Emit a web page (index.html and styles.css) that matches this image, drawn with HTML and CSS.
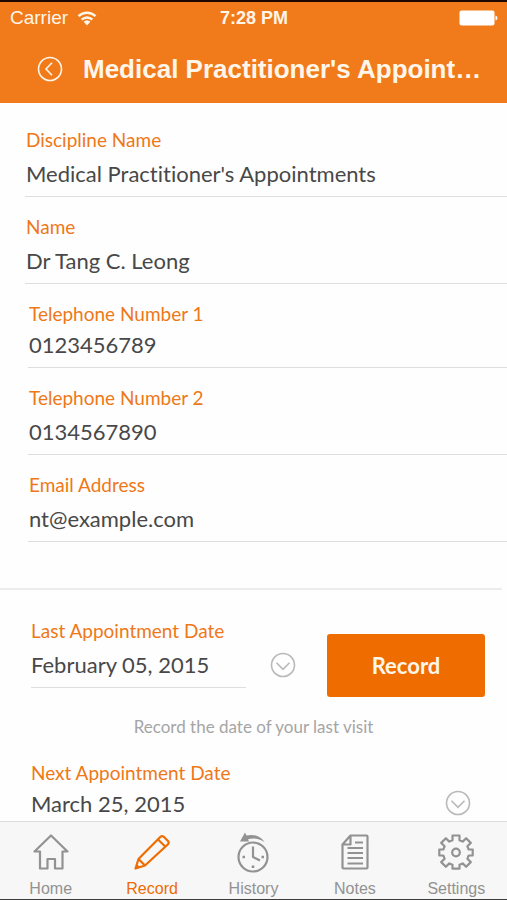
FILE: index.html
```html
<!DOCTYPE html>
<html lang="en">
<head>
<meta charset="utf-8">
<meta name="viewport" content="width=device-width, initial-scale=1">
<title>Medical Practitioner's Appointments</title>
<link rel="stylesheet" href="styles.css">
</head>
<body>
<header class="header">
  <div class="status">
    <span class="carrier">Carrier
      <svg class="wifi" viewBox="0 0 20 15" aria-hidden="true"><path d="M1.500 5.200a12.200 12.200 0 0 1 17 0M4.700 8.600a7.600 7.600 0 0 1 10.600 0" fill="none" stroke="currentColor" stroke-width="2.5"/><path d="M6.600 10.800a5 5 0 0 1 6.800 0L10 14.500z" fill="currentColor"/></svg>
    </span>
    <span class="time">7:28 PM</span>
    <svg class="battery" viewBox="0 0 39 16" aria-hidden="true"><rect x="0.5" y="0.5" width="35" height="15" rx="2" fill="currentColor"/><path d="M36.500 5.500q2 .5 2 2.500t-2 2.500z" fill="currentColor"/></svg>
  </div>
  <div class="titlebar">
    <button class="icon-button" type="button" aria-label="Back">
      <svg class="round-icon" viewBox="0 0 26 26"><circle cx="13" cy="13" r="11.5"/><path d="M15 6.800 9 13l6 6.200"/></svg>
    </button>
    <h1 class="title">Medical Practitioner's Appoint…</h1>
  </div>
</header>

<main class="content">
  <form>
    <section class="group">
      <div class="field">
        <label class="label" for="discipline">Discipline Name</label>
        <input class="value" id="discipline" type="text" value="Medical Practitioner's Appointments">
      </div>
      <div class="field">
        <label class="label" for="name">Name</label>
        <input class="value" id="name" type="text" value="Dr Tang C. Leong">
      </div>
    </section>
    <section class="group contact">
      <div class="field compact">
        <label class="label" for="tel1">Telephone Number 1</label>
        <input class="value" id="tel1" type="tel" value="0123456789">
      </div>
      <div class="field">
        <label class="label" for="tel2">Telephone Number 2</label>
        <input class="value" id="tel2" type="tel" value="0134567890">
      </div>
      <div class="field">
        <label class="label" for="email">Email Address</label>
        <input class="value" id="email" type="email" value="nt@example.com">
      </div>
    </section>
    <hr class="divider">
    <section class="dates">
      <div class="date-row">
        <div class="field last">
          <label class="label" for="last">Last Appointment Date</label>
          <input class="value" id="last" type="text" value="February 05, 2015">
        </div>
        <button class="icon-button pick" type="button" aria-label="Choose last appointment date">
          <svg class="round-icon" viewBox="0 0 26 26"><circle cx="13" cy="13" r="11.5"/><path d="M6.500 10.800 13 17.400l6.500-6.600"/></svg>
        </button>
        <button class="record" type="button">Record</button>
      </div>
      <p class="hint">Record the date of your last visit</p>
      <div class="date-row">
        <div class="field compact next">
          <label class="label" for="next">Next Appointment Date</label>
          <input class="value" id="next" type="text" value="March 25, 2015">
        </div>
        <button class="icon-button pick" type="button" aria-label="Choose next appointment date">
          <svg class="round-icon" viewBox="0 0 26 26"><circle cx="13" cy="13" r="11.5"/><path d="M6.500 10.800 13 17.400l6.500-6.600"/></svg>
        </button>
      </div>
    </section>
  </form>
</main>

<nav class="tabs">
  <a class="tab" href="#home">
    <svg class="tab-icon" viewBox="0 0 38 38"><path d="M19 2.500 2.500 18.500H8V35.500h7.500V26h7.500v9.500h7.500V18.500H35.500z"/></svg>
    Home
  </a>
  <a class="tab active" href="#record" aria-current="page">
    <svg class="tab-icon" viewBox="0 0 38 38"><path d="M2.500 35.500 5.500 26 27.500 3.800Q29 2.400 30.800 3.800L35 8q1.400 1.600 0 3.200L12 32.500zM5.500 26l6.500 6.500M25 6.500l7.500 7.200M3.400 32l2.600 2.500"/></svg>
    Record
  </a>
  <a class="tab" href="#history">
    <svg class="tab-icon" viewBox="0 0 38 38"><circle cx="19" cy="24" r="14.500"/><path d="M19 13.500V24l7 3.500"/><path d="M8.500 24h2.500M27.500 24H30M19 32.500V35" stroke-width="2.600"/><path class="solid" d="M6 8.500 11-.5l1.400 3C20 .5 27 3.500 30.500 9 25 5.200 19 4.700 14 6.200l1 2.300z"/></svg>
    History
  </a>
  <a class="tab" href="#notes">
    <svg class="tab-icon" viewBox="0 0 38 38"><path d="M14.500 2.500H30.500Q31.500 2.500 31.500 3.500V34.500Q31.500 35.500 30.500 35.500H7.500Q6.500 35.500 6.500 34.500V11.500zM14.500 3v8.500H6.500M19 9.500h8M11.500 15H27M11.500 20H27M11.500 25H27M11.500 30.500H27"/></svg>
    Notes
  </a>
  <a class="tab" href="#settings">
    <svg class="tab-icon" viewBox="0 0 38 38"><path d="M15.500 2.500h7v4.800l3.200 1.300L29.100 5.200l4.700 4.700-3.400 3.400 1.300 3.200h4v6h-4l-1.300 3.200 3.400 3.400-4.700 4.700-3.400-3.400-3.200 1.300v4h-7v-4l-3.200-1.300-3.400 3.400-4.700-4.700 3.400-3.400-1.300-3.200h-4v-6h4l1.300-3.200-3.400-3.400 4.700-4.700 3.400 3.400 3.200-1.300z"/><circle cx="19" cy="19.500" r="3.800"/></svg>
    Settings
  </a>
</nav>
</body>
</html>
```
FILE: styles.css
```css
* { box-sizing: border-box; }

body {
  margin: 0;
  height: 100vh;
  display: flex;
  flex-direction: column;
  background: #fefefe;
  color: #484848;
  font-family: Lato, "Liberation Sans", sans-serif;
  font-variant-ligatures: none;
  border-top: 2px solid #1c0800;
  border-bottom: 1px solid #3c3c3c;
}

button { border: 0; padding: 0; cursor: pointer; }

.header {
  flex: none;
  background: #f17b1a;
  color: #fff6ea;
  font-family: "Liberation Sans", sans-serif;
}

.status {
  display: grid;
  grid-template-columns: 1fr auto 1fr;
  align-items: center;
  height: 32px;
  padding: 0 9px 0 10px;
  font-size: 19px;
}

.carrier { display: flex; align-items: center; gap: 9px; }
.wifi { width: 20px; height: 15px; }
.time { font-weight: bold; font-size: 18px; }
.battery { width: 39px; height: 16px; justify-self: end; color: #fff; }

.titlebar {
  display: flex;
  align-items: center;
  gap: 20px;
  height: 69px;
  padding: 0 20px 0 37px;
}

.title {
  flex: 1;
  min-width: 0;
  margin: 0;
  font-size: 26px;
  line-height: 32px;
  overflow: hidden;
  text-overflow: ellipsis;
  white-space: nowrap;
}

.icon-button {
  flex: none;
  width: 26px;
  height: 26px;
  background: none;
  color: inherit;
}

.round-icon {
  display: block;
  width: 26px;
  height: 26px;
  fill: none;
  stroke: currentColor;
  stroke-width: 1.6;
}

.content {
  flex: 1;
  min-height: 0;
  overflow-y: auto;
  scrollbar-width: none;
  padding-top: 7px;
}

.group { padding-left: 25px; }
.contact { padding-left: 28px; }

.field {
  display: flex;
  flex-direction: column;
  gap: 4px;
  padding: 18px 0 6px 1px;
  border-bottom: 1px solid #dedede;
}

.compact { gap: 1px; }

.label {
  color: #ee7818;
  font-size: 19px;
  line-height: 24px;
}

.value {
  width: 100%;
  height: 34px;
  padding: 0;
  border: 0;
  outline: 0;
  background: none;
  color: inherit;
  font-family: inherit;
  font-size: 22px;
  font-variant-ligatures: none;
}

.divider {
  height: 2px;
  margin: 46px 5px 0 0;
  border: 0;
  background: #ececec;
}

.dates { padding: 11px 22px 0 31px; }
.date-row { display: flex; align-items: flex-end; }
.dates .field { padding-left: 0; }

.last {
  flex: 1;
  min-width: 0;
  margin-right: 24px;
  margin-bottom: 9px;
}

.next { flex: 1; border: 0; }

.pick { color: #b9b9b9; }
.last + .pick { margin-right: 31px; margin-bottom: 19px; }
.next + .pick { margin-right: 14px; margin-bottom: 10px; }

.record {
  flex: none;
  width: 158px;
  height: 63px;
  border-radius: 3px;
  background: #ee6c00;
  color: #fff6ea;
  font: bold 22px Lato, sans-serif;
}

.hint {
  margin: 18px 0 4px;
  padding-right: 9px;
  color: #a5a5a5;
  font-size: 17px;
  line-height: 24px;
  text-align: center;
}

.tabs {
  flex: none;
  display: grid;
  grid-template-columns: repeat(5, 1fr);
  height: 78px;
  background: #f7f7f7;
  border-top: 1px solid #dcdcdc;
}

.tab {
  display: flex;
  flex-direction: column;
  align-items: center;
  padding-top: 11px;
  gap: 8px;
  color: #929292;
  font: 16px/20px "Liberation Sans", sans-serif;
  text-decoration: none;
}

.active { color: #ee6c00; }

.tab-icon {
  width: 38px;
  height: 38px;
  overflow: visible;
  fill: none;
  stroke: currentColor;
  stroke-width: 2.2;
  stroke-linejoin: round;
}

.solid { fill: currentColor; stroke: none; }
```
